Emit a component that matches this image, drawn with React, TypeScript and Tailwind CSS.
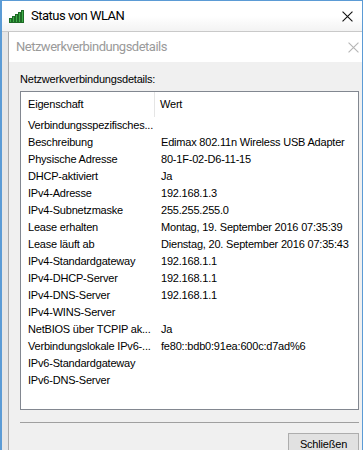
import React from 'react'

const rows: [string, string][] = [
  ['Verbindungsspezifisches...', ''],
  ['Beschreibung', 'Edimax 802.11n Wireless USB Adapter'],
  ['Physische Adresse', '80-1F-02-D6-11-15'],
  ['DHCP-aktiviert', 'Ja'],
  ['IPv4-Adresse', '192.168.1.3'],
  ['IPv4-Subnetzmaske', '255.255.255.0'],
  ['Lease erhalten', 'Montag, 19. September 2016 07:35:39'],
  ['Lease läuft ab', 'Dienstag, 20. September 2016 07:35:43'],
  ['IPv4-Standardgateway', '192.168.1.1'],
  ['IPv4-DHCP-Server', '192.168.1.1'],
  ['IPv4-DNS-Server', '192.168.1.1'],
  ['IPv4-WINS-Server', ''],
  ['NetBIOS über TCPIP ak...', 'Ja'],
  ['Verbindungslokale IPv6-...', 'fe80::bdb0:91ea:600c:d7ad%6'],
  ['IPv6-Standardgateway', ''],
  ['IPv6-DNS-Server', ''],
]

function SignalIcon() {
  // five ascending green bars
  const bars = [4, 6, 8, 10, 12]
  return (
    <svg width="16" height="13" viewBox="0 0 16 13">
      {bars.map((h, i) => (
        <rect key={i} x={i * 3 + 0.5} y={12.5 - h} width="2" height={h} fill="#3fae49" stroke="#1e6b26" strokeWidth="1" />
      ))}
    </svg>
  )
}

function CloseX({ color, size }: { color: string; size: number }) {
  return (
    <svg width={size} height={size} viewBox="0 0 10 10">
      <path d="M0.5 0.5 L9.5 9.5 M9.5 0.5 L0.5 9.5" stroke={color} strokeWidth="1" />
    </svg>
  )
}

export default function App() {
  return (
    <div className="w-[363px] h-[450px] overflow-hidden flex flex-col bg-white border-t border-l-2 border-r border-[#5b9bd5] font-['Liberation_Sans',Arial,sans-serif]">
      {/* outer title bar */}
      <div className="h-[31px] shrink-0 flex items-center bg-gradient-to-b from-white via-white to-[#f3f3f3] border-b border-[#c9c9c9]">
        <div className="ml-[7px] w-[16px] flex items-center"><SignalIcon /></div>
        <span className="ml-[6px] text-[13px] text-black font-['Roboto',sans-serif] tracking-[-0.5px]">Status von WLAN</span>
        <div className="ml-auto mr-[9px] flex items-center"><CloseX color="#111" size={11} /></div>
      </div>

      <div className="flex-1 flex bg-[#e6e6e6]">
        <div className="w-[6px] shrink-0" />
        {/* inner dialog */}
        <div className="flex-1 flex flex-col border-l border-[#aaaaaa] bg-[#f0f0f0]">
          <div className="h-[30px] shrink-0 flex items-center bg-white">
            <span className="ml-[7px] text-[13px] text-[#9a9a9a] font-['Roboto',sans-serif] tracking-[-0.5px]">Netzwerkverbindungsdetails</span>
            <div className="ml-auto mr-[3px] flex items-center"><CloseX color="#b5b5b5" size={11} /></div>
          </div>

          <div className="flex-1 flex flex-col pl-[11px] pr-[3px] text-[11px] tracking-[-0.2px] text-black">
            <div className="h-[14px] mt-[10px] leading-[14px]">Netzwerkverbindungsdetails:</div>
            <div className="mt-[5px] h-[319px] border border-[#828790] bg-white flex flex-col">
              <div className="h-[25px] flex shrink-0">
                <div className="w-[134px] pl-[7px] flex items-center border-r border-[#e5e5e5]">Eigenschaft</div>
                <div className="flex-1 pl-[5px] flex items-center">Wert</div>
              </div>
              {rows.map(([k, v]) => (
                <div key={k} className="h-[17px] flex items-center shrink-0">
                  <div className="w-[134px] pl-[7px] whitespace-nowrap">{k}</div>
                  <div className="flex-1 pl-[6px] whitespace-nowrap">{v}</div>
                </div>
              ))}
            </div>
            <div className="mt-[12px] h-px bg-[#a0a0a0]" />
            <div className="mt-[10px] flex justify-end">
              <div className="w-[71px] h-[23px] border border-[#adadad] bg-[#e1e1e1] flex items-center justify-center">Schließen</div>
            </div>
          </div>
        </div>
      </div>
    </div>
  )
}
